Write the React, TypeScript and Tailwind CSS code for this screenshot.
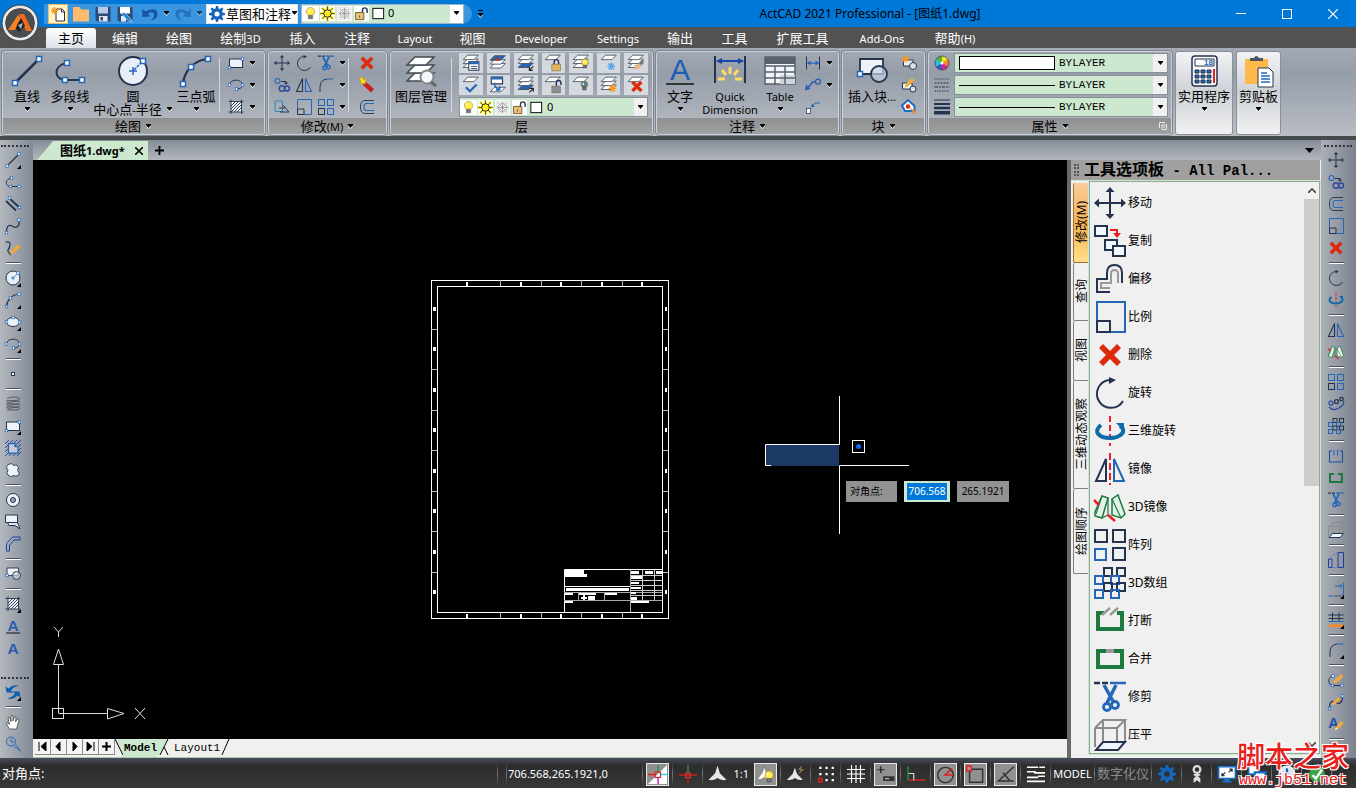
import { Fragment, ReactNode } from 'react';
import clsx from 'clsx';

const NAVY = '#24344f';
const BLUE = '#2467b8';
const GREEN = '#1c7a3e';
const RED = '#dc2a0c';

/* ---------- icon parts, all on a 32 x 32 grid ---------- */

const Dot = ({ x, y }: { x: number; y: number }) => (
  <rect x={x - 2.5} y={y - 2.5} width="5" height="5" fill="#fff" stroke={BLUE} strokeWidth="1.5" />
);

const Box = ({ x, y, s = 10, c = NAVY, fill = 'none' }: { x: number; y: number; s?: number; c?: string; fill?: string }) => (
  <rect x={x} y={y} width={s} height={s} fill={fill} stroke={c} strokeWidth="2" />
);

const Sheet = ({ y, fill = '#fff' }: { y: number; fill?: string }) => (
  <path d={`M2 ${y + 8}L10 ${y}H29L21 ${y + 8}Z`} fill={fill} stroke="#444b55" strokeWidth="1.5" />
);

const Pencil = () => (
  <g>
    <path d="M14 28L17 20L26 10L31 15L22 25Z" fill="#f2a93b" />
    <path d="M14 28L16 23L19 26Z" fill="#fff" />
  </g>
);

const Burst = ({ x, y, c }: { x: number; y: number; c: string }) => (
  <g stroke={c} strokeWidth="2.5">
    <path d={`M${x - 7} ${y}h14M${x} ${y - 7}v14M${x - 5} ${y - 5}l10 10M${x - 5} ${y + 5}l10 -10`} />
  </g>
);

const Padlock = ({ open, c = '#e0b560' }: { open?: boolean; c?: string }) => (
  <g>
    <path d={open ? 'M22 18V12q0-4 4-4t4 4v4' : 'M18 20V14q0-4 4-4t4 4v6'} fill="none" stroke="#24345f" strokeWidth="2.5" />
    <rect x="14" y="18" width="15" height="12" fill={c} stroke="#7a6030" />
  </g>
);

const Bulb = ({ x = 16, y = 12, r = 9, c = '#ffe94d' }: { x?: number; y?: number; r?: number; c?: string }) => (
  <g>
    <circle cx={x} cy={y} r={r} fill={c} stroke="#8a7a20" />
    <path d={`M${x - r / 2} ${y + r - 1}h${r}v${r * 0.8}h${-r}Z`} fill="#777" stroke="#444" />
    <path d={`M${x - r / 3} ${y - r / 2}v${r / 1.5}`} stroke="#fff" strokeWidth="2" />
  </g>
);

const glyphs: Record<string, ReactNode> = {
  line: <><path d="M4 28L28 4" stroke={NAVY} strokeWidth="2.5" /><Dot x={4} y={28} /><Dot x={28} y={4} /></>,
  polyline: <><path d="M13 8C-1 10 0 24 10 25H28" fill="none" stroke={NAVY} strokeWidth="2" /><Dot x={13} y={8} /><Dot x={11} y={25} /><Dot x={28} y={25} /></>,
  dline: <><path d="M8 4L30 24M2 10L22 29" stroke={NAVY} strokeWidth="3.5" /><Dot x={9} y={4} /><Dot x={29} y={23} /></>,
  spline: <><path d="M3 29C3 8 14 16 18 18S30 18 28 4" fill="none" stroke={NAVY} strokeWidth="2.5" /><Dot x={3} y={29} /><Dot x={28} y={4} /></>,
  sketch: <><path d="M1 4Q12 2 10 10T6 20T12 30" fill="none" stroke={NAVY} strokeWidth="2.5" /><path d="M10 29L13 21L25 9L31 14L18 26Z" fill="#f2a93b" /></>,
  circle: <><circle cx="16" cy="16" r="14" fill="#e8eff8" stroke={NAVY} strokeWidth="2" /><path d="M12 16h8M16 12v8" stroke={BLUE} strokeWidth="1.5" /><path d="M17 15l9-9" stroke={BLUE} strokeWidth="1.5" strokeDasharray="3 1" /><Dot x={26} y={6} /></>,
  arc: <><path d="M3 29C4 16 14 5 28 4" fill="none" stroke={NAVY} strokeWidth="2.2" /><Dot x={3} y={29} /><Dot x={11} y={12} /><Dot x={28} y={4} /></>,
  ellipse: <><ellipse cx="16" cy="16" rx="13" ry="9" fill="#eef3fa" stroke={NAVY} strokeWidth="2" /><Dot x={16} y={7} /><Dot x={3} y={16} /><Dot x={29} y={16} /></>,
  ellipseArc: <><path d="M3 16C4 3 29 3 29 16C29 21 24 24 17 24" fill="none" stroke={NAVY} strokeWidth="2" /><Dot x={3} y={16} /><Dot x={29} y={16} /><Dot x={17} y={24} /></>,
  point: <rect x="13" y="13" width="6" height="6" fill="#fff" stroke={NAVY} strokeWidth="2" />,
  helix: <path d="M4 5C14 0 34 2 28 7S2 6 3 11S32 6 29 13S2 12 3 17S32 12 29 19S2 18 3 23S32 18 29 25S6 24 5 30" fill="none" stroke="#4a4f57" strokeWidth="1.8" />,
  rect: <><rect x="3" y="8" width="26" height="17" fill="#eef3fa" stroke={NAVY} strokeWidth="2" /><Dot x={29} y={8} /><Dot x={3} y={25} /></>,
  region: <><path d="M0 8L8 0M0 16L16 0M0 24L24 0M0 32L32 0M8 32L32 8M16 32L32 16M24 32L32 24" stroke="#1f3f9e" strokeWidth="1.8" /><path d="M7 7H20V13H26V26H7Z" fill="#c6ccd6" stroke={BLUE} strokeWidth="2.5" /></>,
  cloud: <path d="M9 4Q15 1 17 7Q26 4 27 12Q24 15 26 18Q31 22 26 27Q21 30 18 27Q10 32 6 26Q2 21 6 17Q-1 8 9 4Z" fill="#eef3fa" stroke={NAVY} strokeWidth="1.8" />,
  donut: <><circle cx="16" cy="16" r="13" fill="#eef3fa" stroke={NAVY} strokeWidth="2" /><circle cx="16" cy="16" r="5" fill="#9aa1ac" stroke={NAVY} strokeWidth="2" /></>,
  wipeout: <><path d="M1 2H25V17H1Z" fill="#eef3fa" stroke={NAVY} strokeWidth="2" /><path d="M5 17L8 23H20L30 30L25 17Z" fill="#dfe6f0" stroke={NAVY} strokeWidth="2" /></>,
  mline: <path d="M3 30V15L15 2H30V8H18L9 18V30Z" fill="none" stroke="#1f3f9e" strokeWidth="2" />,
  insert: <><path d="M4 4H27V19H4Z" fill="#eef3fa" stroke={NAVY} strokeWidth="1.8" /><circle cx="23" cy="19" r="8" fill="#c6d2e2" fillOpacity=".7" stroke={NAVY} strokeWidth="1.8" /><Dot x={4} y={19} /></>,
  hatch: <><path d="M6 5H27V26H6Z" fill="#eef3fa" /><path d="M6 14L15 5M6 20L21 5M6 26L27 5M12 26L27 11M18 26L27 17" stroke={NAVY} strokeWidth="1.8" /><path d="M1 5H31M1 26H31M6 1V30M27 1V30" stroke={NAVY} strokeWidth="1.8" /></>,
  textU: <><text x="16" y="25" textAnchor="middle" fontFamily="Liberation Sans" fontWeight="700" fontSize="31" fill="#2a5cae">A</text><path d="M2 30H30" stroke="#111" strokeWidth="2" /></>,
  textA: <text x="16" y="27" textAnchor="middle" fontFamily="Liberation Sans" fontWeight="700" fontSize="31" fill="#2a5cae">A</text>,
  textPen: <><text x="11" y="24" textAnchor="middle" fontFamily="Liberation Sans" fontWeight="700" fontSize="29" fill="#1f4fa8">A</text><Pencil /></>,
  orbit: <><path d="M3 17L1 5L7 9Q16 0 28 3Q16 6 12 13L17 17Z" fill="#0d5cb6" /><path d="M29 15L31 27L25 23Q16 32 4 29Q16 26 20 19L15 15Z" fill="#0d5cb6" /></>,
  pan: <path d="M9 30L3 20Q2 16 6 18L9 21L6 8Q8 5 10 8L12 15V4Q14 1 16 4V14L19 5Q22 4 22 7L21 16L25 10Q28 9 28 12L23 30Z" fill="#fff" stroke="#555" strokeWidth="1.8" />,
  zoom: <><circle cx="12" cy="11" r="9" fill="none" stroke={BLUE} strokeWidth="2" /><path d="M12 5V12H18" fill="none" stroke={BLUE} strokeWidth="2" /><circle cx="22" cy="21" r="3" fill="none" stroke={BLUE} strokeWidth="1.5" /><path d="M24 23L31 30" stroke={BLUE} strokeWidth="2.5" /></>,

  move: <><path d="M16 3V29M3 16H29" stroke={NAVY} strokeWidth="2" /><path d="M16 0L20.500 5H11.500ZM16 32L20.500 27H11.500ZM0 16L5 11.500V20.500ZM32 16L27 11.500V20.500Z" fill={NAVY} /></>,
  copy: <><path d="M1 1H13V11H1Z" fill="#f2f8ff" stroke={NAVY} strokeWidth="2" /><path d="M11 15H23V25H11Z" fill="#f2f8ff" stroke={NAVY} strokeWidth="2" /><path d="M19 21H31V31H19Z" fill="#f2f8ff" stroke={NAVY} strokeWidth="2" /><path d="M16 5H23V9" fill="none" stroke="#ee1c25" strokeWidth="2" /><path d="M19 8H27L23 13Z" fill="#ee1c25" /></>,
  copySmall: <><circle cx="7" cy="8" r="5" fill="none" stroke={BLUE} strokeWidth="2.2" /><circle cx="16" cy="23" r="5.500" fill="none" stroke="#2c4c9c" strokeWidth="3" /><circle cx="26" cy="23" r="5" fill="none" stroke="#2c4c9c" strokeWidth="3" /><path d="M14 9H24V13" fill="none" stroke={NAVY} strokeWidth="2" /><path d="M20 11H28L24 16Z" fill={NAVY} /></>,
  offset: <><path d="M16 29H3V16H13V10Q13 2 20.500 2T28 10V20" fill="none" stroke={NAVY} strokeWidth="2" /><path d="M16 25H7V20H17V11Q17 7 20.500 7T24 11V20" fill="none" stroke="#999" strokeWidth="2" /></>,
  offsetSmall: <><path d="M30 3H12Q3 3 3 16T12 29H30" fill="none" stroke={NAVY} strokeWidth="1.8" /><path d="M30 9H15Q10 9 10 16T15 23H30" fill="none" stroke={BLUE} strokeWidth="2.2" /></>,
  scale: <><path d="M3 1H31V31H3Z" fill="none" stroke={BLUE} strokeWidth="2" /><path d="M3 20H16V31H3Z" fill="none" stroke={NAVY} strokeWidth="2" /></>,
  delete: <path d="M9 5L16 12L23 5L27 9L20 16L27 23L23 27L16 20L9 27L5 23L12 16L5 9Z" fill={RED} />,
  deleteSmall: <path d="M8 3L16 11L24 3L29 8L21 16L29 24L24 29L16 21L8 29L3 24L11 16L3 8Z" fill={RED} />,
  rotate: <><path d="M15 3A14 14 0 1 0 29 24" fill="none" stroke={NAVY} strokeWidth="2" /><path d="M15 0L22 3L15 7Z" fill={NAVY} /></>,
  rotate3d: <><path d="M16 1V31" stroke="#ee1c25" strokeWidth="2" strokeDasharray="6 3" /><path d="M7 10C-2 17 6 23 16 23S34 16 26 11" fill="none" stroke="#0f6ba8" strokeWidth="4" /><path d="M22 8H30V16Z" fill="#0f6ba8" /></>,
  mirror: <><path d="M13 3V29H1Z" fill="none" stroke={NAVY} strokeWidth="2.2" /><path d="M19 3V29H31Z" fill="none" stroke={BLUE} strokeWidth="2.2" /></>,
  mirrorRed: <><path d="M12 6V28H2Z" fill="none" stroke={NAVY} strokeWidth="2" /><path d="M20 6V28H30Z" fill="none" stroke={BLUE} strokeWidth="2" /><path d="M16 0V32" stroke="#ee1c25" strokeWidth="2" strokeDasharray="7 3" /></>,
  mirror3d: <><path d="M8 5L14 7L8 27L1 25V21Z" fill="#e4f3ea" stroke={GREEN} strokeWidth="1.5" /><path d="M14 7V24L8 27M8 5L2 23" stroke={GREEN} strokeWidth="1.2" fill="none" /><path d="M18 8L24 4L31 23L27 27L18 24Z" fill="#e4f3ea" stroke={GREEN} strokeWidth="1.5" /><path d="M18 8L27 27" stroke={GREEN} strokeWidth="1.2" /><path d="M0 9L5 14M14 24L21 30" stroke="#ee1c25" strokeWidth="2.5" /></>,
  array: <><Box x={1} y={1} s={12} /><Box x={19} y={1} s={12} /><Box x={1} y={20} s={11} c={BLUE} /><Box x={19} y={19} s={12} /></>,
  arraySmall: <><Box x={1} y={1} s={12} c={BLUE} /><Box x={19} y={1} s={12} c={BLUE} /><Box x={1} y={19} s={12} /><Box x={19} y={19} s={12} c={BLUE} /></>,
  arrayPath: <><circle cx="6" cy="14" r="4" fill="none" stroke="#2c4c9c" strokeWidth="2.5" /><circle cx="17" cy="11" r="4" fill="none" stroke={NAVY} strokeWidth="2.5" /><circle cx="27" cy="6" r="3.500" fill="none" stroke={NAVY} strokeWidth="2.5" /><path d="M2 22Q10 31 22 24T31 10" fill="none" stroke="#2c4c9c" strokeWidth="2.5" /></>,
  array3d: <><Box x={10} y={1} s={8} /><Box x={23} y={1} s={8} /><Box x={1} y={9} s={8} c={BLUE} /><Box x={17} y={9} s={8} c={BLUE} /><Box x={10} y={16} s={8} /><Box x={23} y={16} s={8} /><Box x={1} y={23} s={8} c={BLUE} /><Box x={17} y={23} s={8} c={BLUE} /></>,
  break: <><path d="M10 8H4V24H28V8H23" fill="none" stroke={GREEN} strokeWidth="4" /><path d="M8 10L16 3M16 10L24 3" stroke="#999" strokeWidth="2.5" /></>,
  breakSmall: <><path d="M8 6H3V28H29V6H24" fill="none" stroke="#1f4fa8" strokeWidth="2.2" /><path d="M12 3V15M19 3V15" stroke={BLUE} strokeWidth="2" /></>,
  join: <><path d="M12 8H4V24H28V8H20" fill="none" stroke={GREEN} strokeWidth="4" /><path d="M12 8H20" stroke="#999" strokeWidth="4" /></>,
  trim: <><path d="M0 2H14" stroke={NAVY} strokeWidth="2.5" strokeDasharray="6 2" /><path d="M16 2H32" stroke={BLUE} strokeWidth="2.5" /><path d="M10 4L20 22M22 4L13 22" stroke={BLUE} strokeWidth="3.5" /><circle cx="13" cy="26" r="3.500" fill="none" stroke={BLUE} strokeWidth="2.800" /><circle cx="21" cy="24" r="3.500" fill="none" stroke={BLUE} strokeWidth="2.800" /></>,
  flatten: <><path d="M1 9H23V28M1 9V28M1 9L9 1H31L23 9M31 1V22M9 1V22" fill="none" stroke="#8b8b8b" strokeWidth="2" /><path d="M9 23H31L24 31H2Z" fill="#eef6ff" stroke={NAVY} strokeWidth="2" /></>,
  stretch: <><path d="M2 4H17V25H2Z" fill="none" stroke="#2f86c4" strokeWidth="2" /><path d="M18 12L30 26H12" fill="none" stroke={NAVY} strokeWidth="2" /><path d="M10 18H22" stroke={NAVY} strokeWidth="2" /></>,
  fillet: <><path d="M4 30V20Q4 6 18 4" fill="none" stroke={NAVY} strokeWidth="2" /><path d="M18 4H31" stroke={BLUE} strokeWidth="2" /></>,
  wand: <><path d="M13 9L30 24L24 31L8 16Z" fill="#c8201a" /><path d="M6 0L9 5L15 4L12 9L14 14L8 12L3 14L4 8L1 3Z" fill="#ffe31a" stroke="#c98d00" /></>,
  align: <><path d="M1 14H8V31H1ZM20 1H31V31H20Z" fill="none" stroke="#1f3f9e" strokeWidth="2" /><path d="M4 12L18 1M10 31H18" stroke={BLUE} strokeWidth="2" strokeDasharray="2 3" /></>,
  lengthen: <><path d="M14 8H28M24 4L28 8L24 12M31 2V31" fill="none" stroke={BLUE} strokeWidth="2" /><path d="M1 28H12" stroke={BLUE} strokeWidth="2" /><path d="M14 28H30" stroke={NAVY} strokeWidth="2" strokeDasharray="5 2" /></>,
  fence: <><path d="M1 6H31M1 13H31M9 1V18M22 1V18" stroke={NAVY} strokeWidth="2" /><path d="M1 19H31" stroke={BLUE} strokeWidth="2" /><path d="M1 25H31V30H1Z" fill="#f58a1f" /></>,
  editPline: <><path d="M10 8C-2 10 0 26 8 27H28" fill="none" stroke={NAVY} strokeWidth="2" /><path d="M10 23L13 16L26 4L31 9L18 21Z" fill="#f2a93b" /><Dot x={10} y={8} /><Dot x={9} y={27} /><Dot x={28} y={27} /></>,
  editSpline: <><path d="M3 29C3 8 14 16 18 18S30 18 28 4" fill="none" stroke={NAVY} strokeWidth="2.5" /><path d="M8 22L11 15L21 6L25 10L15 20Z" fill="#f2a93b" /><Dot x={3} y={29} /><Dot x={29} y={4} /></>,

  layers: <><Sheet y={18} /><Sheet y={10} /><Sheet y={2} /><circle cx="22" cy="22" r="6.500" fill="#f4f7fa" stroke="#888" strokeWidth="2" /><path d="M26 27L31 31" stroke="#666" strokeWidth="3" /></>,
  lay1: <><Sheet y={16} /><Sheet y={9} /><Sheet y={2} /><path d="M12 14H30V29H12Z" fill="#fff" stroke={NAVY} strokeWidth="1.8" /><path d="M12 14H30V18H12Z" fill={BLUE} /><path d="M16 22H27M16 26H27" stroke={NAVY} strokeWidth="1.5" /></>,
  lay2: <><Sheet y={17} /><Sheet y={10} /><Sheet y={3} fill={BLUE} /><rect x="11" y="7" width="6" height="5" fill={RED} /></>,
  lay3: <><Sheet y={16} fill={BLUE} /><Sheet y={9} /><Sheet y={2} /><path d="M29 22L22 29M22 23V29H28" fill="none" stroke="#222" strokeWidth="2" /></>,
  lay4: <><Sheet y={2} /><Padlock /></>,
  lay5: <><Sheet y={16} /><Sheet y={9} /><Sheet y={2} /><Bulb x={23} y={15} r={6} /></>,
  lay6: <><Sheet y={2} /><Burst x={20} y={22} c="#59a6ec" /></>,
  lay7: <><Sheet y={16} /><Sheet y={9} /><Sheet y={2} /><path d="M29 11L21 20" stroke="#777" strokeWidth="4" /><path d="M22 17L13 20L12 28L21 26L26 21Z" fill="#e3b891" /></>,
  lay8: <><Sheet y={2} /><path d="M7 20L14 27L26 15" fill="none" stroke={BLUE} strokeWidth="4" /></>,
  lay9: <><Sheet y={20} /><path d="M4 2H24V14H4Z" fill="#fff" stroke={NAVY} strokeWidth="2" /><path d="M4 2H24V6H4Z" fill={BLUE} /><path d="M10 12Q9 21 18 24M12 25H19V18" fill="none" stroke={BLUE} strokeWidth="2.5" /></>,
  lay10: <><Sheet y={16} fill={BLUE} /><Sheet y={9} /><Sheet y={2} /><path d="M22 29L29 22M23 22H29V28" fill="none" stroke="#222" strokeWidth="2" /></>,
  lay11: <><Sheet y={2} /><Padlock open c="#8a9099" /></>,
  lay12: <><Sheet y={2} /><Bulb x={22} y={15} r={6} c="#5b7d9c" /></>,
  lay13: <><Sheet y={16} /><Sheet y={9} /><Sheet y={2} /><Burst x={22} y={22} c="#f59a1f" /></>,
  lay14: <><Sheet y={2} /><g transform="translate(4 5) scale(.85)"><path d="M9 5L16 12L23 5L27 9L20 16L27 23L23 27L16 20L9 27L5 23L12 16L5 9Z" fill={RED} stroke={RED} strokeWidth="2" /></g></>,

  bigText: <><text x="16" y="25" textAnchor="middle" fontFamily="Liberation Sans" fontSize="30" fill="#1a5fb4">A</text><path d="M2 29H30" stroke="#111" strokeWidth="1.5" /></>,
  quickDim: <><path d="M1 1V28M31 1V28" stroke={NAVY} strokeWidth="2" /><path d="M3 6H29" stroke="#1745a8" strokeWidth="2" /><path d="M2 6L8 3V9ZM30 6L24 3V9Z" fill="#1745a8" /><path d="M16 12V19M8 15L12 20M24 15L20 20M4 24H11M21 24H28" stroke="#ffd966" strokeWidth="3" /></>,
  table: <><path d="M1 2H31V29H1Z" fill="#f0f3f7" stroke="#59616c" strokeWidth="1.5" /><path d="M16 20H31V29H16Z" fill="#cfd4db" /><path d="M1 2H31V9H1Z" fill="#59616c" /><path d="M1 11H31M1 17H31M1 23H31M11 11V29M21 11V29" stroke="#59616c" strokeWidth="1.5" /></>,
  dimLinear: <><path d="M3 3V29M29 3V29" stroke={NAVY} strokeWidth="2" /><path d="M5 16H27" stroke={BLUE} strokeWidth="2.5" /><path d="M4 16L11 11V21ZM28 16L21 11V21Z" fill={BLUE} /></>,
  leader: <><circle cx="26" cy="9" r="5" fill="none" stroke="#2b5db4" strokeWidth="2.5" /><path d="M21 10H15L6 22" fill="none" stroke="#2b5db4" strokeWidth="3" /><path d="M0 27L2 15L11 24Z" fill="#2b5db4" /></>,
  dimPoint: <><rect x="3" y="19" width="8" height="10" fill="#fff" stroke={NAVY} strokeWidth="1.5" /><path d="M15 15L20 8H30" fill="none" stroke={BLUE} strokeWidth="2" /><path d="M12 17L14 9L20 15Z" fill={BLUE} /></>,
  blockNew: <><path d="M5 10H24V22H5Z" fill="#eef3fa" stroke={NAVY} strokeWidth="2" /><circle cx="24" cy="22" r="7" fill="#d9e2ee" stroke={NAVY} strokeWidth="2" /><Burst x={9} y={8} c="#f59a1f" /></>,
  blockEdit: <><path d="M3 12H22V24H3Z" fill="#eef3fa" stroke={NAVY} strokeWidth="2" /><circle cx="24" cy="24" r="6" fill="#d9e2ee" stroke={NAVY} strokeWidth="2" /><path d="M7 21L10 13L22 2L27 7L15 18Z" fill="#f2a93b" /></>,
  blockAttr: <><path d="M2 13L14 2L27 14V24H8Z" fill="#fff" stroke="#1a6fc4" strokeWidth="4" /><circle cx="14" cy="15" r="4.500" fill={RED} /><path d="M17 17L30 25L27 31Z" fill="#f58a1f" /></>,
  wheel: <>
    <path d="M16 16V2A14 14 0 0 1 28 9Z" fill="#f6e11a" /><path d="M16 16L28 9A14 14 0 0 1 28 23Z" fill="#f08a24" />
    <path d="M16 16L28 23A14 14 0 0 1 16 30Z" fill="#d8268a" /><path d="M16 16V30A14 14 0 0 1 4 23Z" fill="#3b54c9" />
    <path d="M16 16L4 23A14 14 0 0 1 4 9Z" fill="#2fc0d8" /><path d="M16 16L4 9A14 14 0 0 1 16 2Z" fill="#4fb840" />
    <circle cx="16" cy="16" r="14" fill="none" stroke="#39404c" strokeWidth="1.5" /><circle cx="16" cy="16" r="3" fill="#fff" />
  </>,
  linetypes: <><path d="M1 4H31" stroke={NAVY} strokeWidth="2" strokeDasharray="2 2" /><path d="M1 12H31" stroke={NAVY} strokeWidth="2" strokeDasharray="4 2" /><path d="M1 20H31" stroke={NAVY} strokeWidth="2" strokeDasharray="7 2 3 2" /><path d="M1 28H31" stroke={NAVY} strokeWidth="2" strokeDasharray="3 2" /></>,
  weights: <><path d="M0 2H32" stroke={NAVY} strokeWidth="2" /><path d="M0 10H32" stroke={NAVY} strokeWidth="4" /><path d="M0 18H32" stroke={NAVY} strokeWidth="5" /><path d="M0 27.500H32" stroke={NAVY} strokeWidth="7" /></>,
  calc: <><rect x="4" y="1" width="25" height="30" rx="3" fill="#f7f8fa" stroke={NAVY} strokeWidth="1.5" /><path d="M7 4H26V11H7Z" fill="#fff" stroke={NAVY} /><text x="25" y="10" textAnchor="end" fontFamily="Liberation Sans" fontWeight="700" fontSize="8" fill={BLUE}>18</text><g fill={BLUE} stroke={NAVY}><path d="M7 15h4v3h-4zM13 15h4v3h-4zM19 15h4v3h-4zM7 20h4v3h-4zM13 20h4v3h-4zM19 20h4v3h-4zM7 25h4v3h-4zM13 25h4v3h-4zM19 25h4v3h-4z" /></g><path d="M26 14V28" stroke="#d22" strokeWidth="2" /></>,
  clip: <><path d="M2 4H25V29H2Z" fill="#ffb94a" /><path d="M7 6V3H11Q13 -1 16 3H20V6Z" fill="#4c5360" /><path d="M15 13H26L30 17V32H15Z" fill="#fff" stroke={NAVY} /><path d="M18 18H24M18 21H27M18 24H27M18 27H27" stroke={BLUE} strokeWidth="1.3" /></>,

  fileNew: <><path d="M12 6H24L29 11V30H12Z" fill="#fff" stroke="#333" strokeWidth="2" /><path d="M23 6V12H29" fill="none" stroke="#333" strokeWidth="2" /><Burst x={9} y={9} c="#f59a1f" /></>,
  open: <path d="M0 2H13L16 7H32V31H0Z" fill="#fdbb6d" />,
  save: <><path d="M1 2H31V31H4L1 28Z" fill="#2c4a78" /><path d="M6 2H26V15H6Z" fill="#b7c9e2" /><path d="M8 20H25V31H8Z" fill="#dfe7f2" /><path d="M11 22H16V29H11Z" fill="#2c4a78" /></>,
  saveAs: <><path d="M1 2H31V31H4L1 28Z" fill="#2c4a78" /><path d="M6 2H26V15H6Z" fill="#fff" /><path d="M8 20H18V31H8Z" fill="#dfe7f2" /><path d="M14 12L28 26L30 32L23 30L10 17Z" fill="#1d86dc" stroke="#fff" /></>,
  undo: <path d="M0 6L1 22L17 21L12 16Q21 8 24 17Q25 24 17 29Q32 27 31 14Q28 1 7 11Z" fill="#1354a8" />,
  redo: <path d="M32 6L31 22L15 21L20 16Q11 8 8 17Q7 24 15 29Q0 27 1 14Q4 1 25 11Z" fill="#2472bd" />,
  gear: <><path d="M14 0h4l1 5 3 1 4-3 3 3-3 4 1 3 5 1v4l-5 1-1 3 3 4-3 3-4-3-3 1-1 5h-4l-1-5-3-1-4 3-3-3 3-4-1-3-5-1v-4l5-1 1-3-3-4 3-3 4 3 3-1z" fill="#1565b8" /><circle cx="16" cy="16" r="5" fill="#fff" /></>,
  bulb: <Bulb />,
  sun: <><rect width="32" height="32" fill="#fff" /><g stroke="#f5e800" strokeWidth="5"><path d="M16 0V32M0 16H32M4 4L28 28M4 28L28 4" /></g><g stroke="#222" strokeWidth="1.5"><path d="M16 1V31M1 16H31M5 5L27 27M5 27L27 5" /></g><circle cx="16" cy="16" r="8" fill="#ffee1a" stroke="#222" strokeWidth="2" /></>,
  freeze: <><rect width="32" height="32" fill="#f6f6f6" /><path d="M4 4H28V28H4Z" fill="none" stroke="#aaa" strokeDasharray="3 2" /><g stroke="#9a9a9a" strokeWidth="1.8"><path d="M16 4V28M4 16H28M7 7L25 25M7 25L25 7M11 8h10M11 24h10M8 11v10M24 11v10" /></g></>,
  unlock: <><rect width="32" height="32" fill="#fff" /><path d="M18 16V9q0-5 5-5t5 5v6" fill="none" stroke="#24345f" strokeWidth="3" /><path d="M3 14H21V29H3Z" fill="#e7c281" stroke="#7a5a20" strokeWidth="2" /><path d="M12 20V25" stroke="#555" strokeWidth="2" /></>,
  swatch: <rect x="4" y="5" width="23" height="22" fill="#fff" stroke="#000" strokeWidth="2" />,

  stSnapCur: <><path d="M0 0H32V32H0Z" fill="#8f8f8f" /><path d="M32 0V32H0Z" fill="#fff" /><path d="M17 1V12" stroke="#1d9a3c" strokeWidth="2.5" /><path d="M0 16H12" stroke="#e02020" strokeWidth="2.5" /><path d="M20 16H32" stroke="#20d8e8" strokeWidth="2.5" /><path d="M17 20V32" stroke="#d020b0" strokeWidth="2.5" /><rect x="12" y="12" width="9" height="9" fill="none" stroke="#e02020" strokeWidth="2" /></>,
  stCross: <><path d="M16 0V16" stroke="#2aa84a" strokeWidth="2" /><path d="M0 18H32M16 22V32" stroke="#e02020" strokeWidth="2" /><rect x="12" y="14" width="8" height="8" fill="none" stroke="#ee3030" strokeWidth="2" /></>,
  stScale: <path d="M16 1L20 14L31 25Q22 27 16 22Q10 27 1 25L12 14Z" fill="#e4e7ea" />,
  stScaleBulb: <><path d="M14 3L18 14L24 24Q18 26 14 21Q8 26 2 24L10 14Z" fill="#fff" stroke="#555" strokeWidth=".8" /><Bulb x={22} y={17} r={7} /></>,
  stScaleAuto: <><path d="M14 5L18 16L28 26Q20 28 14 23Q8 28 0 26L10 16Z" fill="#e4e7ea" /><path d="M27 0L19 9H24L20 17L31 7H25Z" fill="#8d7250" /></>,
  stSnap: <><g fill="#fff"><path d="M4 3h4v4h-4zM15 3h4v4h-4zM26 3h4v4h-4zM4 14h4v4h-4zM15 14h4v4h-4zM26 14h4v4h-4zM15 25h4v4h-4zM26 25h4v4h-4z" /></g><rect x="3" y="24" width="6" height="6" fill="none" stroke="#e02020" strokeWidth="2.5" /></>,
  stGrid: <path d="M0 8H32M0 16H32M0 24H32M8 0V32M16 0V32M24 0V32" stroke="#fff" strokeWidth="2" />,
  stDyn: <><path d="M2 8H14M8 2V14" stroke="#222" strokeWidth="2" /><path d="M12 19H31V27H12Z" fill="#333" /><path d="M15 23H22" stroke="#bbb" strokeWidth="2" /></>,
  stOrtho: <><path d="M2 2V27" stroke="#1a9a3a" strokeWidth="2.5" /><path d="M3 27H32" stroke="#e02020" strokeWidth="2.5" /><path d="M3 15H12V27" fill="none" stroke="#ddd" strokeWidth="2" /></>,
  stPolar: <><circle cx="16" cy="17" r="13" fill="none" stroke="#333" strokeWidth="2.5" /><path d="M29 17H15L27 6" fill="none" stroke="#e02020" strokeWidth="2.5" /></>,
  stOsnap: <><path d="M6 7H28V29H6Z" fill="none" stroke="#333" strokeWidth="2.5" /><rect x="1" y="2" width="8" height="8" fill="#999" stroke="#e02020" strokeWidth="2.5" /></>,
  stTrack: <path d="M30 3L4 27H30M12 13L23 26" fill="none" stroke="#333" strokeWidth="2.5" />,
  stLwt: <path d="M0 4H20M22 4H32M0 12H14V14H32M0 22H20M20 20H32M0 29H32" fill="none" stroke="#fff" strokeWidth="3" />,
  stGear: <path d="M14 0h4l1 5 3 1 4-3 3 3-3 4 1 3 5 1v4l-5 1-1 3 3 4-3 3-4-3-3 1-1 5h-4l-1-5-3-1-4 3-3-3 3-4-1-3-5-1v-4l5-1 1-3-3-4 3-3 4 3 3-1zM16 11a5 5 0 1 0 0 10a5 5 0 1 0 0-10z" fill="#1565b8" fillRule="evenodd" />,
  stMedal: <><circle cx="16" cy="8" r="6" fill="none" stroke="#ddd" strokeWidth="4" /><path d="M10 16H22V18L18 20L22 24V32L16 27L10 32V24L14 20L10 18Z" fill="#ddd" /></>,
  stMonitor: <><path d="M1 3H31V24H1Z" fill="#fff" stroke="#1a6fc4" strokeWidth="3" /><path d="M11 24H21V29H25V31H7V29H11Z" fill="#1a6fc4" /><path d="M7 19L13 13M7 14V19H12M25 7L19 13M20 7H25V12" fill="none" stroke="#222" strokeWidth="2" /></>,
  stWindows: <><path d="M1 2H19V16H1Z" fill="#fff" stroke="#1a6fc4" strokeWidth="3" /><path d="M12 13H31V29H12Z" fill="#fff" stroke="#1a6fc4" strokeWidth="4" /></>,
  stClock: <><circle cx="16" cy="16" r="14" fill="#dfe8ee" stroke="#fff" strokeWidth="2" /><path d="M16 6V17" stroke="#1565b8" strokeWidth="4" /><path d="M16 20V25" stroke="#1565b8" strokeWidth="4" /></>,
  stCheck: <><circle cx="16" cy="16" r="14" fill="#3aa648" /><path d="M8 18L14 24L25 8" fill="none" stroke="#fff" strokeWidth="4" /></>,
};

function Icon({ name, className = 'size-4' }: { name: string; className?: string }) {
  return (
    <svg viewBox="0 0 32 32" className={clsx('shrink-0 overflow-visible', className)} aria-hidden="true">
      {glyphs[name]}
    </svg>
  );
}

function Arrow({ className }: { className?: string }) {
  return (
    <svg viewBox="0 0 7 5" className={clsx('h-[5px] w-[7px] shrink-0', className)} aria-hidden="true">
      <path d="M1 2H6L3.500 5Z" fill="#fff" />
      <path d="M1 0H6V1L3.500 4L1 1Z" fill="#000" />
    </svg>
  );
}

/* ---------- title bar and menu ---------- */

function LayerState() {
  return (
    <>
      {['bulb', 'sun', 'freeze', 'unlock', 'swatch'].map((n) => (
        <span key={n} className={clsx('flex w-[17px] justify-center', n === 'bulb' && 'bg-white')}>
          <Icon name={n} className="size-[15px]" />
        </span>
      ))}
    </>
  );
}

function QuickAccess() {
  return (
    <div className="ml-11 flex h-5 items-center rounded-r-full bg-[#3a95e0] pr-2 pl-1">
      <button aria-label="New" className="flex h-5 w-5 items-center justify-center border border-[#e0c070] bg-[#fff3c4]">
        <Icon name="fileNew" />
      </button>
      {['open', 'save', 'saveAs'].map((n) => (
        <button key={n} aria-label={n} className="flex w-[22px] justify-center pl-1">
          <Icon name={n} />
        </button>
      ))}
      <button aria-label="Undo" className="ml-2 flex w-7 items-center justify-between"><Icon name="undo" /><Arrow /></button>
      <button aria-label="Redo" className="ml-[5px] flex w-7 items-center justify-between"><Icon name="redo" /><Arrow className="opacity-60" /></button>
      <div className="ml-[3px] flex h-5 w-[92px] items-center border border-[#dce6f0] bg-white pl-[2px]">
        <Icon name="gear" />
        <select aria-label="Workspace" className="w-[67px] shrink-0 appearance-none bg-transparent pl-px text-[13px] leading-[18px]">
          <option>草图和注释</option>
        </select>
        <Arrow className="-ml-px" />
      </div>
      <div className="ml-[3px] flex h-5 w-[163px] items-center border border-[#9ab4d0] bg-[#cce8cf]">
        <LayerState />
        <select aria-label="Current layer" className="h-full flex-1 appearance-none bg-transparent pl-px text-[11px]">
          <option>0</option>
        </select>
        <span className="flex h-full w-[13px] items-center justify-center bg-white"><Arrow /></span>
      </div>
    </div>
  );
}

function TitleBar() {
  return (
    <header className="flex h-[27px] shrink-0 items-center bg-[#0078d7]">
      <QuickAccess />
      <button aria-label="Customize quick access" className="flex w-4 flex-col items-center gap-[2px]">
        <span className="h-px w-[5px] bg-black" />
        <Arrow />
      </button>
      <h1 className="flex-1 pl-[34px] text-center text-[12px] text-black">ActCAD 2021 Professional - [图纸1.dwg]</h1>
      <button aria-label="Minimize" className="flex h-full w-[46px] items-center justify-center"><span className="h-px w-[10px] bg-white" /></button>
      <button aria-label="Maximize" className="flex h-full w-[46px] items-center justify-center"><span className="size-[10px] border border-white" /></button>
      <button aria-label="Close" className="flex h-full w-[46px] items-center justify-center">
        <svg viewBox="0 0 10 10" className="size-[10px]"><path d="M0 0L10 10M10 0L0 10" stroke="#fff" strokeWidth="1.2" /></svg>
      </button>
    </header>
  );
}

function AppButton() {
  return (
    <button aria-label="Application menu" className="absolute top-[4px] left-px z-10">
      <svg viewBox="0 0 38 38" className="size-[38px]">
        <circle cx="19" cy="19" r="18" fill="#e8eaec" stroke="#3a3a3a" strokeWidth="1" />
        <circle cx="19" cy="19" r="15.500" fill="#4a4d50" stroke="#fff" strokeWidth="1" />
        <path d="M7 26L17 11L20 14L14 26Z" fill="#f58220" />
        <path d="M18 10H23L31 27H25Z" fill="#f26a1b" />
        <path d="M16 21L20 14L24 22L18 28L15 25Z" fill="#202326" />
        <path d="M17 21L22 19L20 25Z" fill="#a8adb2" />
      </svg>
    </button>
  );
}

const menus = [
  { label: '主页', w: 'w-[54px]' },
  { label: '编辑', w: 'w-[54px]' },
  { label: '绘图', w: 'w-[54px]' },
  { label: '绘制3D', w: 'w-[69px]' },
  { label: '插入', w: 'w-[55px]' },
  { label: '注释', w: 'w-[54px]' },
  { label: 'Layout', w: 'w-[62px]' },
  { label: '视图', w: 'w-[53px]' },
  { label: 'Developer', w: 'w-[84px]' },
  { label: 'Settings', w: 'w-[70px]' },
  { label: '输出', w: 'w-[54px]' },
  { label: '工具', w: 'w-[55px]' },
  { label: '扩展工具', w: 'w-[81px]' },
  { label: 'Add-Ons', w: 'w-[78px]' },
  { label: '帮助(H)', w: 'w-[68px]' },
];

// CJK runs are set at 13px and latin runs at 11px
function Mixed({ text, latin = 'text-[11px]' }: { text: string; latin?: string }) {
  return (
    <>
      {text.split(/([\x20-\x7e]+)/).map((part, i) => (
        <span key={i} className={i % 2 ? latin : undefined}>{part}</span>
      ))}
    </>
  );
}

function MenuBar() {
  return (
    <nav className="flex h-[21px] shrink-0 items-end bg-[#525252] pl-11">
      {menus.map((m, i) => (
        <button key={m.label} className={clsx('flex h-5 items-stretch justify-center px-[2px] text-[13px] leading-5', m.w)}>
          <span
            className={clsx(
              'flex-1 whitespace-nowrap',
              i === 0 ? 'rounded-t-[3px] bg-linear-to-b from-white to-[#dde2e8] text-black' : 'text-white',
            )}
          >
            <Mixed text={m.label} />
          </span>
        </button>
      ))}
    </nav>
  );
}

/* ---------- ribbon ---------- */

function Panel({ title, menu, launcher, className, children }: { title: string; menu?: boolean; launcher?: boolean; className: string; children: ReactNode }) {
  return (
    <section className={clsx('flex shrink-0 flex-col overflow-hidden rounded-[3px] border border-[#ccd1d7] outline outline-[#7e8691]', className)}>
      <div className="flex min-h-0 flex-1">{children}</div>
      <h2 className="flex h-4 items-center justify-center bg-linear-to-b from-[#8f9092] to-[#a0a1a3] text-[13px] leading-4 text-black">
        {launcher && <span className="w-3" />}
        <span className="flex flex-1 items-center justify-center gap-1">
          <span><Mixed text={title} /></span>
          {menu && <Arrow />}
        </span>
        {launcher && (
          <svg viewBox="0 0 8 8" className="mr-1 size-2"><path d="M.5 6V.5H6M3 3H7.500V7.500H3ZM3 3L6 6" fill="none" stroke="#e8e8e8" /></svg>
        )}
      </h2>
    </section>
  );
}

function BigButton({ icon, label, second, menu, className }: { icon: string; label: string; second?: string; menu?: boolean; className: string }) {
  return (
    <button className={clsx('flex shrink-0 flex-col items-center pt-[3px] text-[13px] leading-[13px] whitespace-nowrap text-black', className)}>
      <Icon name={icon} className="mb-[3px] size-8" />
      <span><Mixed text={label} /></span>
      <span className="flex h-[13px] items-center gap-1">
        {second && <span><Mixed text={second} /></span>}
        {menu && <Arrow />}
      </span>
    </button>
  );
}

const Rule = () => <span className="my-[6px] w-px shrink-0 bg-[#d5d9de]" />;

function SmallColumn({ icons, arrows, className }: { icons: string[]; arrows?: boolean[]; className: string }) {
  return (
    <div className={clsx('flex shrink-0 flex-col', className)}>
      {icons.map((n, i) => (
        <button key={n} aria-label={n} className="flex h-[22px] items-center gap-[5px]">
          <Icon name={n} />
          {arrows?.[i] && <Arrow />}
        </button>
      ))}
    </div>
  );
}

function PropertyRow({ label, children, value }: { label: string; children: ReactNode; value: string }) {
  return (
    <div className="flex h-[22px] items-center">
      <label className="flex h-5 flex-1 items-center border border-[#8a9099] bg-[#cce8cf] pl-1">
        {children}
        <select aria-label={label} className="w-[98px] appearance-none bg-transparent pl-1 font-['Liberation_Mono',monospace] text-[11px] leading-4 text-black">
          <option>{value}</option>
        </select>
        <span className="flex h-full w-[14px] items-center justify-center bg-[#f0f0f0]"><Arrow /></span>
      </label>
    </div>
  );
}

function Ribbon() {
  return (
    <div className="flex h-[88px] shrink-0 gap-[3px] bg-linear-to-b from-[#a3aab4] via-[#959da9] via-30% to-[#babec4] px-[2px] pt-[3px] pb-px">
      <Panel title="绘图" menu className="w-[263px]">
        <BigButton icon="line" label="直线" menu className="w-12" />
        <BigButton icon="polyline" label="多段线" menu className="w-[38px]" />
        <BigButton icon="circle" label="圆" second="中心点-半径" menu className="w-[88px]" />
        <BigButton icon="arc" label="三点弧" menu className="w-[38px]" />
        <span className="w-1" />
        <Rule />
        <SmallColumn className="ml-2" icons={['rect', 'ellipseArc', 'hatch']} arrows={[true, true, true]} />
      </Panel>
      <Panel title="修改(M)" menu className="w-[119px]">
        <SmallColumn className="ml-[5px] w-[22px]" icons={['move', 'copySmall', 'stretch']} />
        <SmallColumn className="w-[22px]" icons={['rotate', 'mirror', 'scale']} />
        <SmallColumn className="w-[30px]" icons={['trim', 'fillet', 'arraySmall']} arrows={[true, true, true]} />
        <Rule />
        <SmallColumn className="ml-[10px]" icons={['deleteSmall', 'wand', 'offsetSmall']} />
      </Panel>
      <Panel title="层" className="w-[263px]">
        <BigButton icon="layers" label="图层管理" className="w-[60px]" />
        <Rule />
        <div className="ml-[7px] flex w-[189px] flex-col">
          <div className="grid grid-cols-7 gap-x-1">
            {[1, 2, 3, 4, 5, 6, 7, 8, 9, 10, 11, 12, 13, 14].map((n) => (
              <button key={n} aria-label={`Layer tool ${n}`} className="my-px flex h-5 items-center justify-center bg-[#d3d9df]">
                <Icon name={`lay${n}`} className="size-[18px]" />
              </button>
            ))}
          </div>
          <div className="mt-px flex h-5 items-center border border-[#8a9099] bg-[#cce8cf]">
            <LayerState />
            <select aria-label="Layer" className="h-full flex-1 appearance-none bg-transparent pl-[2px] text-[11px]">
              <option>0</option>
            </select>
            <span className="flex h-full w-[13px] items-center justify-center bg-[#f0f0f0]"><Arrow /></span>
          </div>
        </div>
      </Panel>
      <Panel title="注释" menu className="w-[183px]">
        <BigButton icon="bigText" label="文字" menu className="w-[46px]" />
        <BigButton icon="quickDim" label="Quick" second="Dimension" className="w-[54px]" />
        <BigButton icon="table" label="Table" menu className="w-[46px]" />
        <SmallColumn className="ml-[2px]" icons={['dimLinear', 'leader', 'dimPoint']} arrows={[true, true, false]} />
      </Panel>
      <Panel title="块" menu className="w-[83px]">
        <BigButton icon="insert" label="插入块..." className="w-[58px]" />
        <SmallColumn icons={['blockNew', 'blockEdit', 'blockAttr']} className="" />
      </Panel>
      <Panel title="属性" menu launcher className="w-[244px]">
        <SmallColumn className="ml-[5px] w-5" icons={['wheel', 'linetypes', 'weights']} />
        <div className="mr-[3px] flex flex-1 flex-col">
          <PropertyRow label="Color" value="BYLAYER"><span className="h-[14px] flex-1 border border-black bg-white" /></PropertyRow>
          <PropertyRow label="Linetype" value="BYLAYER"><span className="h-px flex-1 bg-black" /></PropertyRow>
          <PropertyRow label="Lineweight" value="BYLAYER"><span className="h-px flex-1 bg-black" /></PropertyRow>
        </div>
      </Panel>
      <div className="flex w-[58px] shrink-0 justify-center rounded-[3px] border border-[#8a9099] bg-linear-to-b from-[#f2f3f5] via-[#cdd1d6] to-[#f2f2f3]">
        <BigButton icon="calc" label="实用程序" menu className="w-14" />
      </div>
      <div className="flex w-[45px] shrink-0 justify-center rounded-[3px] border border-[#8a9099] bg-linear-to-b from-[#f2f3f5] via-[#cdd1d6] to-[#f2f2f3]">
        <BigButton icon="clip" label="剪贴板" menu className="w-[43px]" />
      </div>
    </div>
  );
}

/* ---------- side toolbars ---------- */

// a trailing "+" marks a fly-out button
const drawGroups = [
  ['line+', 'polyline', 'dline', 'spline', 'sketch'],
  ['circle+', 'arc+', 'ellipse+', 'ellipseArc+'],
  ['point'],
  ['helix', 'rect+', 'region', 'cloud'],
  ['donut', 'wipeout', 'mline'],
  ['insert'],
  ['hatch+', 'textU', 'textA'],
];
const viewGroups = [['orbit+'], ['pan', 'zoom']];
const modifyGroups = [
  ['move', 'copySmall', 'offsetSmall', 'scale', 'deleteSmall'],
  ['rotate', 'rotate3d'],
  ['mirror', 'mirror3d'],
  ['arraySmall', 'arrayPath', 'array3d'],
  ['breakSmall', 'join', 'trim'],
  ['flatten'],
  ['align'],
  ['lengthen+'],
  ['fence+'],
  ['fillet+'],
  ['editPline', 'editSpline', 'textPen'],
  ['blockAttr'],
];

const Handle = () => <div className="mx-px h-1 w-7 shrink-0 border-t-2 border-dotted border-[#2f343b]" />;

function ToolGroups({ groups }: { groups: string[][] }) {
  return (
    <>
      {groups.map((group, gi) => (
        <Fragment key={gi}>
          {gi > 0 && (
            <div className="flex h-2 w-[26px] shrink-0 flex-col items-center justify-center">
              <span className="h-px w-[15px] bg-[#4d535c]" />
              <span className="h-px w-[15px] bg-white" />
            </div>
          )}
          {group.map((item) => {
            const name = item.replace('+', '');
            return (
              <button key={item} aria-label={name} className="relative flex h-[22px] w-[26px] shrink-0 items-center justify-center">
                <Icon name={name} />
                {item.endsWith('+') && (
                  <svg viewBox="0 0 4 4" className="absolute right-[5px] bottom-[2px] size-1"><path d="M4 0V4H0Z" fill="#000" /></svg>
                )}
              </button>
            );
          })}
        </Fragment>
      ))}
    </>
  );
}

/* ---------- drawing area ---------- */

const topTicks = [500.5, 541.5, 581.5, 622.5];
const topDots = [467, 521, 561, 602, 642];
const sideTicks = [329.5, 369.5, 410.5, 450.5, 491.5, 531.5, 572.5];
const sideDots = [309, 349, 390, 430, 471, 511, 552, 592];

function Drawing() {
  return (
    <svg className="absolute inset-0 size-full" aria-hidden="true">
      <g transform="translate(-33 -160)" fill="none" stroke="#fff">
        <rect x="431.500" y="280.500" width="237" height="338" />
        <rect x="437.500" y="286.500" width="225" height="326" />
        {topTicks.map((x) => <path key={x} d={`M${x} 280V286M${x} 612V618`} stroke="#bbb" />)}
        {sideTicks.map((y) => <path key={y} d={`M431 ${y}H437M663 ${y}H668`} stroke="#bbb" />)}
        <g fill="#fff" stroke="none">
          {topDots.map((x) => <path key={x} d={`M${x - 1} 282h2v4h-2zM${x - 1} 614h2v4h-2z`} />)}
          {sideDots.map((y) => <path key={y} d={`M433 ${y - 2}h3v4h-3zM665 ${y - 2}h2v4h-2z`} />)}
        </g>

        <path d="M564.500 612V569.500H662" />
        <path d="M564 586.500H631" />
        <path d="M564 592.500H662M564 600.500H662M630.500 570V612" stroke="#aaa" />
        <path d="M642.500 570V600M654.500 570V600" stroke="#ccc" />
        <path d="M631 575.500H662M631 580.500H662M631 585.500H662M631 590.500H662M631 595.500H662" stroke="#ccc" />
        <path d="M578.500 592V600M604.500 592V600" stroke="#aaa" />
        <g fill="#fff" stroke="none">
          <path d="M565 570h19v4h-19zM565 574h22v3h-22zM566 588h63v3h-63zM565 593h8v2h-8zM579 593h17v2h-17zM605 593h12v2h-12zM565 601h8v2h-8z" />
          <path d="M631 571h8v3h-8zM645 571h8v3h-8zM656 571h6v3h-6zM631 576h11v3h-11zM631 582h8v2h-8zM631 587h10v2h-10zM631 592h5v2h-5zM631 597h6v3h-6zM631 601h18v2h-18z" />
          <path d="M583 595h2v5h-2zM581 597h6v2h-6zM588 596h7v4h-7z" />
        </g>

        <rect x="766" y="445" width="73" height="21" fill="#1c3864" stroke="none" />
        <path d="M839.500 396V444.500H765.500V465.500H771" />
        <path d="M839.500 534V465.500H909" />
        <rect x="852.500" y="440.500" width="12" height="12" />
        <circle cx="858.500" cy="446.500" r="2.500" fill="#0a6cff" stroke="none" />

        <g stroke="#ddd">
          <rect x="52.500" y="708.500" width="11" height="10" />
          <path d="M58.500 713V665M58.500 713.500H107M53.500 664.500L58.500 649L63.500 664.500ZM107.500 708.500L124 713.500L107.500 719Z" />
          <path d="M54 627L58.500 632L63 627M58.500 632V637M135 708L145 719M145 708L135 719" />
        </g>
      </g>
    </svg>
  );
}

function Canvas() {
  return (
    <div className="relative min-h-0 flex-1 overflow-hidden bg-black">
      <Drawing />
      <div className="absolute top-[321px] left-[813px] flex h-[21px] items-stretch gap-[7px] text-[10px] text-black">
        <label htmlFor="dyn-x" className="w-[51px] bg-[#929292] pl-1 leading-[21px]">对角点:</label>
        <span className="flex w-[46px] bg-[#cce8cf] px-[3px] py-[2px]">
          <input id="dyn-x" defaultValue="706.568" className="w-full bg-[#0078d7] text-center text-white" />
        </span>
        <input aria-label="Y" defaultValue="265.1921" className="w-[52px] bg-[#929292] text-center" />
      </div>
    </div>
  );
}

function DocTabs() {
  return (
    <div className="flex h-5 shrink-0 items-end bg-linear-to-b from-[#858d98] to-[#b2b6bc] pl-1">
      <div className="flex h-[19px] w-[111px] items-center bg-[#cce8cf] pl-[23px] text-[13px] font-bold text-black [clip-path:polygon(16px_0,100%_0,100%_100%,0_100%)]">
        <button className="flex-1 text-left leading-[19px] whitespace-nowrap"><Mixed text="图纸1.dwg*" latin="text-[11px]" /></button>
        <button aria-label="Close drawing" className="mr-[5px]">
          <svg viewBox="0 0 8 8" className="size-2"><path d="M0 0L8 8M8 0L0 8" stroke="#111" strokeWidth="1.6" /></svg>
        </button>
      </div>
      <button aria-label="New drawing" className="ml-[7px] flex h-5 items-center">
        <svg viewBox="0 0 9 9" className="size-[9px]"><path d="M4.500 0V9M0 4.500H9" stroke="#000" strokeWidth="1.800" /></svg>
      </button>
      <span className="flex-1" />
      <button aria-label="Drawing list" className="mr-[7px] flex h-5 items-center">
        <svg viewBox="0 0 9 5" className="h-[5px] w-[9px]"><path d="M0 0H9L4.500 5Z" fill="#000" /></svg>
      </button>
    </div>
  );
}

const navPaths = ['M1 0V9M8 0L3 4.500L8 9Z', 'M6 0L2 4.500L6 9Z', 'M3 0L7 4.500L3 9Z', 'M8 0V9M1 0L6 4.500L1 9Z', 'M4.500 0V9M0 4.500H9'];

function LayoutTabs() {
  return (
    <div className="flex h-[19px] shrink-0 border-b border-[#a8c8ac] bg-[#f0f0f0] pl-[2px] font-['Liberation_Mono',monospace] text-[11px] text-black">
      {navPaths.map((d, i) => (
        <button key={d} aria-label={`Layout navigation ${i + 1}`} className="flex h-4 w-4 items-center justify-center border-r border-b border-[#8a8a8a] bg-[#f4f4f4]">
          <svg viewBox="0 0 9 9" className="size-[9px]"><path d={d} fill="#000" stroke="#000" strokeWidth={i === 4 ? 2 : 1} /></svg>
        </button>
      ))}
      <svg viewBox="0 0 8 16" className="h-4 w-2"><path d="M0 0H8V16Z" fill="#cce8cf" /><path d="M0 0L8 16" stroke="#000" /></svg>
      <button className="bg-[#cce8cf] pl-px leading-4 font-bold">Model</button>
      <svg viewBox="0 0 12 16" className="h-4 w-3"><path d="M0 0H11L3 16H0Z" fill="#cce8cf" /><path d="M11 0L3 16M7 8L11 16" stroke="#000" fill="none" /></svg>
      <button className="pl-[5px] leading-4">Layout1</button>
      <svg viewBox="0 0 10 16" className="h-4 w-[10px]"><path d="M9 0L2 16" stroke="#000" /></svg>
    </div>
  );
}

/* ---------- tool palette ---------- */

const paletteTabs = [
  { label: '修改(M)', h: 'h-20', active: true },
  { label: '查询', h: 'h-[58px]' },
  { label: '视图', h: 'h-[60px]' },
  { label: '三维动态观察', h: 'h-[108px]' },
  { label: '绘图顺序', h: 'h-[85px]' },
];

const paletteItems = [
  ['move', '移动'],
  ['copy', '复制'],
  ['offset', '偏移'],
  ['scale', '比例'],
  ['delete', '删除'],
  ['rotate', '旋转'],
  ['rotate3d', '三维旋转'],
  ['mirrorRed', '镜像'],
  ['mirror3d', '3D镜像'],
  ['array', '阵列'],
  ['array3d', '3D数组'],
  ['break', '打断'],
  ['join', '合并'],
  ['trim', '修剪'],
  ['flatten', '压平'],
];

function Palette() {
  return (
    <aside className="flex w-[254px] shrink-0 flex-col border-l-4 border-[#696969] bg-[#f0f0f0] pr-px text-black">
      <h2 className="flex h-5 shrink-0 items-center bg-[#a0a0a0] pl-[3px] font-bold">
        <span className="mr-[5px] h-3 w-[5px] border-x-2 border-dotted border-[#555]" />
        <span className="text-base leading-5 whitespace-pre">
          <Mixed text="工具选项板 - All Pal..." latin="font-['Liberation_Mono',monospace] text-[14px]" />
        </span>
      </h2>
      <div className="flex min-h-0 flex-1 border-t border-[#cce8cf] pb-1">
        <div className="flex w-[18px] shrink-0 flex-col pt-[2px] pl-[2px]">
          {paletteTabs.map((t) => (
            <button
              key={t.label}
              className={clsx(
                'flex shrink-0 items-center justify-center rounded-l-[2px] border-b border-l text-[12px]',
                t.h,
                t.active ? 'border-[#a07030] bg-linear-to-b from-[#f7cf9a] via-[#f7b04f] to-[#ffe08a]' : 'border-[#808080]',
              )}
            >
              <span className="rotate-180 leading-4 whitespace-nowrap [text-orientation:sideways] [writing-mode:vertical-rl]">{t.label}</span>
            </button>
          ))}
        </div>
        <div className="flex min-w-0 flex-1 overflow-hidden border border-[#8ea894] outline outline-[#cce8cf]">
          <ul className="min-w-0 flex-1 pt-[2px]">
            {paletteItems.map(([icon, label]) => (
              <li key={icon}>
                <button className="flex h-[38px] w-full items-center gap-[2px] pl-1 text-left text-[12px]">
                  <Icon name={icon} className="size-8" />
                  {label}
                </button>
              </li>
            ))}
          </ul>
          <div className="flex w-[15px] shrink-0 flex-col items-center">
            <svg viewBox="0 0 8 5" className="my-[6px] h-[5px] w-2"><path d="M0 5L4 1L8 5" fill="none" stroke="#444" strokeWidth="1.600" /></svg>
            <span className="h-[287px] w-[15px] bg-[#cdcdcd]" />
            <span className="flex-1" />
            <svg viewBox="0 0 8 5" className="my-[6px] h-[5px] w-2"><path d="M0 0L4 4L8 0" fill="none" stroke="#444" strokeWidth="1.600" /></svg>
          </div>
        </div>
      </div>
    </aside>
  );
}

/* ---------- status bar ---------- */

const StatusRule = () => <span className="h-6 w-px shrink-0 bg-linear-to-b from-[#333] via-[#777] to-[#333]" />;

function StatusButton({ icon, on }: { icon: string; on?: boolean }) {
  return (
    <>
      <button
        aria-label={icon}
        aria-pressed={on}
        className={clsx('mx-[3px] flex size-[23px] shrink-0 items-center justify-center', on && 'border border-[#e8e8e8] bg-[#919191]')}
      >
        <Icon name={icon} className={on ? 'size-[19px]' : 'size-[18px]'} />
      </button>
      <StatusRule />
    </>
  );
}

function StatusBar() {
  return (
    <footer className="flex h-[30px] shrink-0 items-center bg-linear-to-b from-[#474e5c] via-[#2d2d2e] via-25% to-[#373737] pt-[2px] text-[12px] text-white">
      <span className="flex-1 pl-[2px] text-[13px]">对角点:</span>
      <StatusRule />
      <span className="w-2" />
      <StatusRule />
      <span className="w-[135px] pl-px text-[11px]">706.568,265.1921,0</span>
      <StatusRule />
      <StatusButton icon="stSnapCur" on />
      <StatusButton icon="stCross" />
      <button className="flex w-12 items-center justify-between pr-[2px] pl-[5px] text-[11px]"><Icon name="stScale" className="size-[19px]" />1:1</button>
      <StatusButton icon="stScaleBulb" on />
      <StatusButton icon="stScaleAuto" />
      <StatusButton icon="stSnap" />
      <StatusButton icon="stGrid" />
      <StatusButton icon="stDyn" on />
      <StatusButton icon="stOrtho" />
      <StatusButton icon="stPolar" on />
      <StatusButton icon="stOsnap" on />
      <StatusButton icon="stTrack" on />
      <StatusButton icon="stLwt" />
      <button className="w-[43px] text-[11px]">MODEL</button>
      <StatusRule />
      <button className="w-14 text-[13px] text-[#8c8c8c]">数字化仪</button>
      <StatusRule />
      <StatusButton icon="stGear" />
      <StatusButton icon="stMedal" />
      <StatusButton icon="stMonitor" />
      <StatusButton icon="stWindows" />
      <StatusButton icon="stClock" />
      <StatusButton icon="stCheck" />
      <span className="w-6" />
    </footer>
  );
}

function SiteStamp() {
  return (
    <div className="pointer-events-none absolute right-1 bottom-0 flex w-[118px] flex-col items-center text-[#e8201c]">
      <span className="text-[28px] leading-[33px] font-medium whitespace-nowrap [text-shadow:1px_1px_0_#fff,-1px_-1px_0_#fff,1px_-1px_0_#fff,-1px_1px_0_#fff]">脚本之家</span>
      <span className="font-['Liberation_Mono',monospace] text-[15px] leading-[15px] [text-shadow:1px_1px_0_#fff,-1px_-1px_0_#fff,1px_-1px_0_#fff,-1px_1px_0_#fff]">www.jb51.net</span>
    </div>
  );
}

export default function App() {
  return (
    <div className="h-screen bg-white pr-[5px] pb-px font-['Noto_Sans','Noto_Sans_CJK_SC',sans-serif]">
      <div className="relative flex h-full flex-col overflow-hidden">
        <AppButton />
        <TitleBar />
        <MenuBar />
        <Ribbon />
        <div className="h-1 shrink-0 bg-[#454a4c]" />
        <main className="flex min-h-0 flex-1">
          <div className="flex w-[33px] shrink-0 flex-col overflow-hidden bg-linear-to-r from-[#b4b8be] to-[#828b97] pt-[5px]">
            <Handle />
            <ToolGroups groups={drawGroups} />
            <div className="mt-[18px]"><Handle /></div>
            <ToolGroups groups={viewGroups} />
          </div>
          <div className="flex min-w-0 flex-1 flex-col">
            <DocTabs />
            <div className="flex min-h-0 flex-1">
              <div className="flex min-w-0 flex-1 flex-col">
                <Canvas />
                <LayoutTabs />
              </div>
              <Palette />
            </div>
          </div>
          <div className="flex w-[35px] shrink-0 flex-col overflow-hidden bg-linear-to-r from-[#acb0b7] to-[#7b828e] pt-[5px] pl-[2px]">
            <Handle />
            <ToolGroups groups={modifyGroups} />
          </div>
        </main>
        <StatusBar />
        <SiteStamp />
      </div>
    </div>
  );
}
